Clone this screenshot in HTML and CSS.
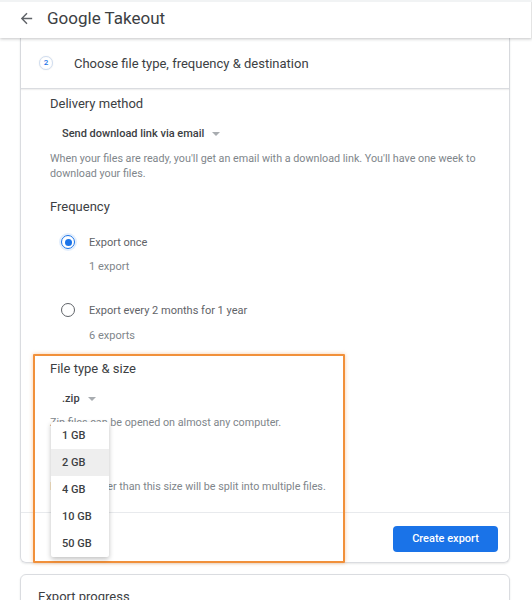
FILE: index.html
```html
<!DOCTYPE html>
<html lang="en">
<head>
<meta charset="UTF-8">
<meta name="viewport" content="width=device-width, initial-scale=1.0">
<title>Google Takeout</title>
<link rel="stylesheet" href="styles.css">
</head>
<body>

<header class="topbar">
    <svg class="back" viewBox="0 0 24 24" width="17" height="17"><path d="M20 11H7.83l5.59-5.59L12 4l-8 8 8 8 1.41-1.41L7.83 13H20v-2z"/></svg>
    <span class="appTitle">Google Takeout</span>
</header>

<main class="page">
    <section class="card">
        <div class="step">
            <span class="stepNum">2</span>
            <span class="stepTitle">Choose file type, frequency &amp; destination</span>
        </div>

        <div class="stepBody">
            <div class="group delivery">
                <h3 class="groupTitle">Delivery method</h3>
                <div class="select">Send download link via email<span class="caret"></span></div>
                <p class="hint">When your files are ready, you'll get an email with a download link. You'll have one week to download your files.</p>
            </div>

            <div class="group frequency">
                <h3 class="groupTitle">Frequency</h3>
                <div class="radioRow first"><span class="radio checked"></span>Export once</div>
                <p class="radioSub">1 export</p>
                <div class="radioRow"><span class="radio"></span>Export every 2 months for 1 year</div>
                <p class="radioSub">6 exports</p>
            </div>

            <div class="group filetype">
                <h3 class="groupTitle">File type &amp; size</h3>
                <div class="select">.zip<span class="caret"></span></div>
                <p class="hint zipHint">Zip files can be opened on almost any computer.</p>
                <div class="select sizeSelect">2 GB<span class="caret"></span>
                    <ul class="menu">
                        <li>1 GB</li>
                        <li class="active">2 GB</li>
                        <li>4 GB</li>
                        <li>10 GB</li>
                        <li>50 GB</li>
                    </ul>
                </div>
                <p class="hint splitHint">Exports larger than this size will be split into multiple files.</p>
            </div>
        </div>

        <div class="stepActions">
            <button class="primaryButton">Create export</button>
        </div>

        <!-- annotation frame drawn over the screenshot -->
        <div class="highlight"></div>
    </section>

    <section class="card progress">
        <h3 class="groupTitle">Export progress</h3>
    </section>
</main>

</body>
</html>
```

FILE: styles.css
```css
html, body {
    margin: 0;
    overflow: hidden;
}

body {
    font-family: Roboto, "Liberation Sans", sans-serif;
    color: #3c4043;
    background-color: #ffffff;
    border-top: 2px solid #f1f3f4;
}

.topbar {
    position: relative;
    z-index: 2;
    height: 36px;
    display: flex;
    align-items: center;
    padding-bottom: 4px;
    box-sizing: border-box;
    background-color: #ffffff;
    border-right: 1px solid #e4e4e4;
    box-shadow: 0 1px 3px rgba(60, 64, 67, 0.3);
}

.back {
    fill: #5f6368;
    margin-left: 18px;
}

.appTitle {
    margin-left: 12px;
    font-size: 17px;
    color: #3c4043;
}

.page {
    padding: 0 22px 0 20px;
}

.card {
    position: relative;
    border: 1px solid #dadce0;
    border-top: none;
    border-radius: 0 0 6px 6px;
    box-shadow: 0 1px 2px rgba(60, 64, 67, 0.12);
}

.step {
    height: 50px;
    display: flex;
    align-items: center;
    padding-left: 18px;
    border-bottom: 1px solid #dadce0;
    box-shadow: 0 1px 1px rgba(60, 64, 67, 0.08);
}

.stepNum {
    width: 14px;
    height: 14px;
    box-sizing: border-box;
    border: 1px solid #cfdcef;
    border-radius: 50%;
    font-size: 8px;
    line-height: 12px;
    text-align: center;
    color: #1a73e8;
    font-weight: 500;
    box-shadow: 0 0 1px rgba(60, 64, 67, 0.2);
}

.stepTitle {
    margin-left: 21px;
    font-size: 13px;
    color: #3c4043;
}

.stepBody {
    padding: 0 30px 17px 29px;
}

.groupTitle {
    margin: 0;
    font-size: 13px;
    font-weight: 400;
    line-height: 16px;
    color: #3c4043;
}

.delivery .groupTitle {
    margin-top: 7px;
}

.frequency .groupTitle {
    margin-top: 18px;
}

.filetype .groupTitle {
    margin-top: 17px;
}

.select {
    position: relative;
    margin-top: 14px;
    padding-left: 12px;
    font-size: 11px;
    font-weight: 500;
    line-height: 16px;
    color: #3c4043;
}

.caret {
    display: inline-block;
    margin-left: 8px;
    vertical-align: middle;
    border-left: 4px solid transparent;
    border-right: 4px solid transparent;
    border-top: 4px solid #a8acb0;
}

.hint {
    margin: 10px 0 0 0;
    font-size: 10.75px;
    line-height: 14.5px;
    color: #80868b;
    max-width: 440px;
}

.zipHint {
    margin-top: 9px;
}

.sizeSelect {
    margin-top: 16px;
}

.splitHint {
    margin-top: 17.5px;
}

.radioRow {
    display: flex;
    align-items: center;
    margin-top: 27px;
    height: 16px;
    font-size: 11px;
    color: #5f6368;
}

.radioRow.first {
    margin-top: 19px;
}

.radio {
    width: 14px;
    height: 14px;
    box-sizing: border-box;
    border: 1.5px solid #5f6368;
    border-radius: 50%;
    margin: 0 14px 0 11px;
    display: flex;
    align-items: center;
    justify-content: center;
}

.radio.checked {
    border-color: #1a73e8;
    box-shadow: 0 0 0 2px rgba(26, 115, 232, 0.12);
}

.radio.checked::after {
    content: "";
    width: 7px;
    height: 7px;
    border-radius: 50%;
    background-color: #1a73e8;
}

.radioSub {
    margin: 9px 0 0 39px;
    font-size: 11px;
    line-height: 16px;
    color: #80868b;
}

.radioRow + .radioSub + .radioRow + .radioSub {
    margin-top: 10px;
}

.menu {
    position: absolute;
    z-index: 3;
    top: -25px;
    left: 1px;
    width: 58px;
    margin: 0;
    padding: 0;
    list-style: none;
    background-color: #ffffff;
    box-shadow: 0 2px 5px rgba(0, 0, 0, 0.25);
    border-radius: 2px;
}

.menu li {
    height: 27px;
    line-height: 27px;
    padding-left: 11px;
    font-size: 11px;
    font-weight: 500;
    color: #3c4043;
}

.menu li.active {
    background-color: #eeeeee;
}

.stepActions {
    display: flex;
    justify-content: flex-end;
    padding: 13px 11px 10px 0;
    border-top: 1px solid #e8eaed;
}

.primaryButton {
    width: 105px;
    height: 26px;
    border: none;
    border-radius: 4px;
    background-color: #1a73e8;
    color: #ffffff;
    font-family: Roboto, "Liberation Sans", sans-serif;
    font-size: 11px;
    font-weight: 500;
    cursor: pointer;
}

.highlight {
    position: absolute;
    z-index: 1;
    top: 316px;
    left: 12px;
    width: 312px;
    height: 209px;
    box-sizing: border-box;
    border: 2px solid #f1903a;
    border-radius: 1px;
    box-shadow: 0 0 4px rgba(241, 144, 58, 0.45);
    pointer-events: none;
}

.progress {
    margin-top: 11px;
    border-top: 1px solid #dadce0;
    border-radius: 6px 6px 0 0;
    padding: 14px 17px 20px;
}
```
